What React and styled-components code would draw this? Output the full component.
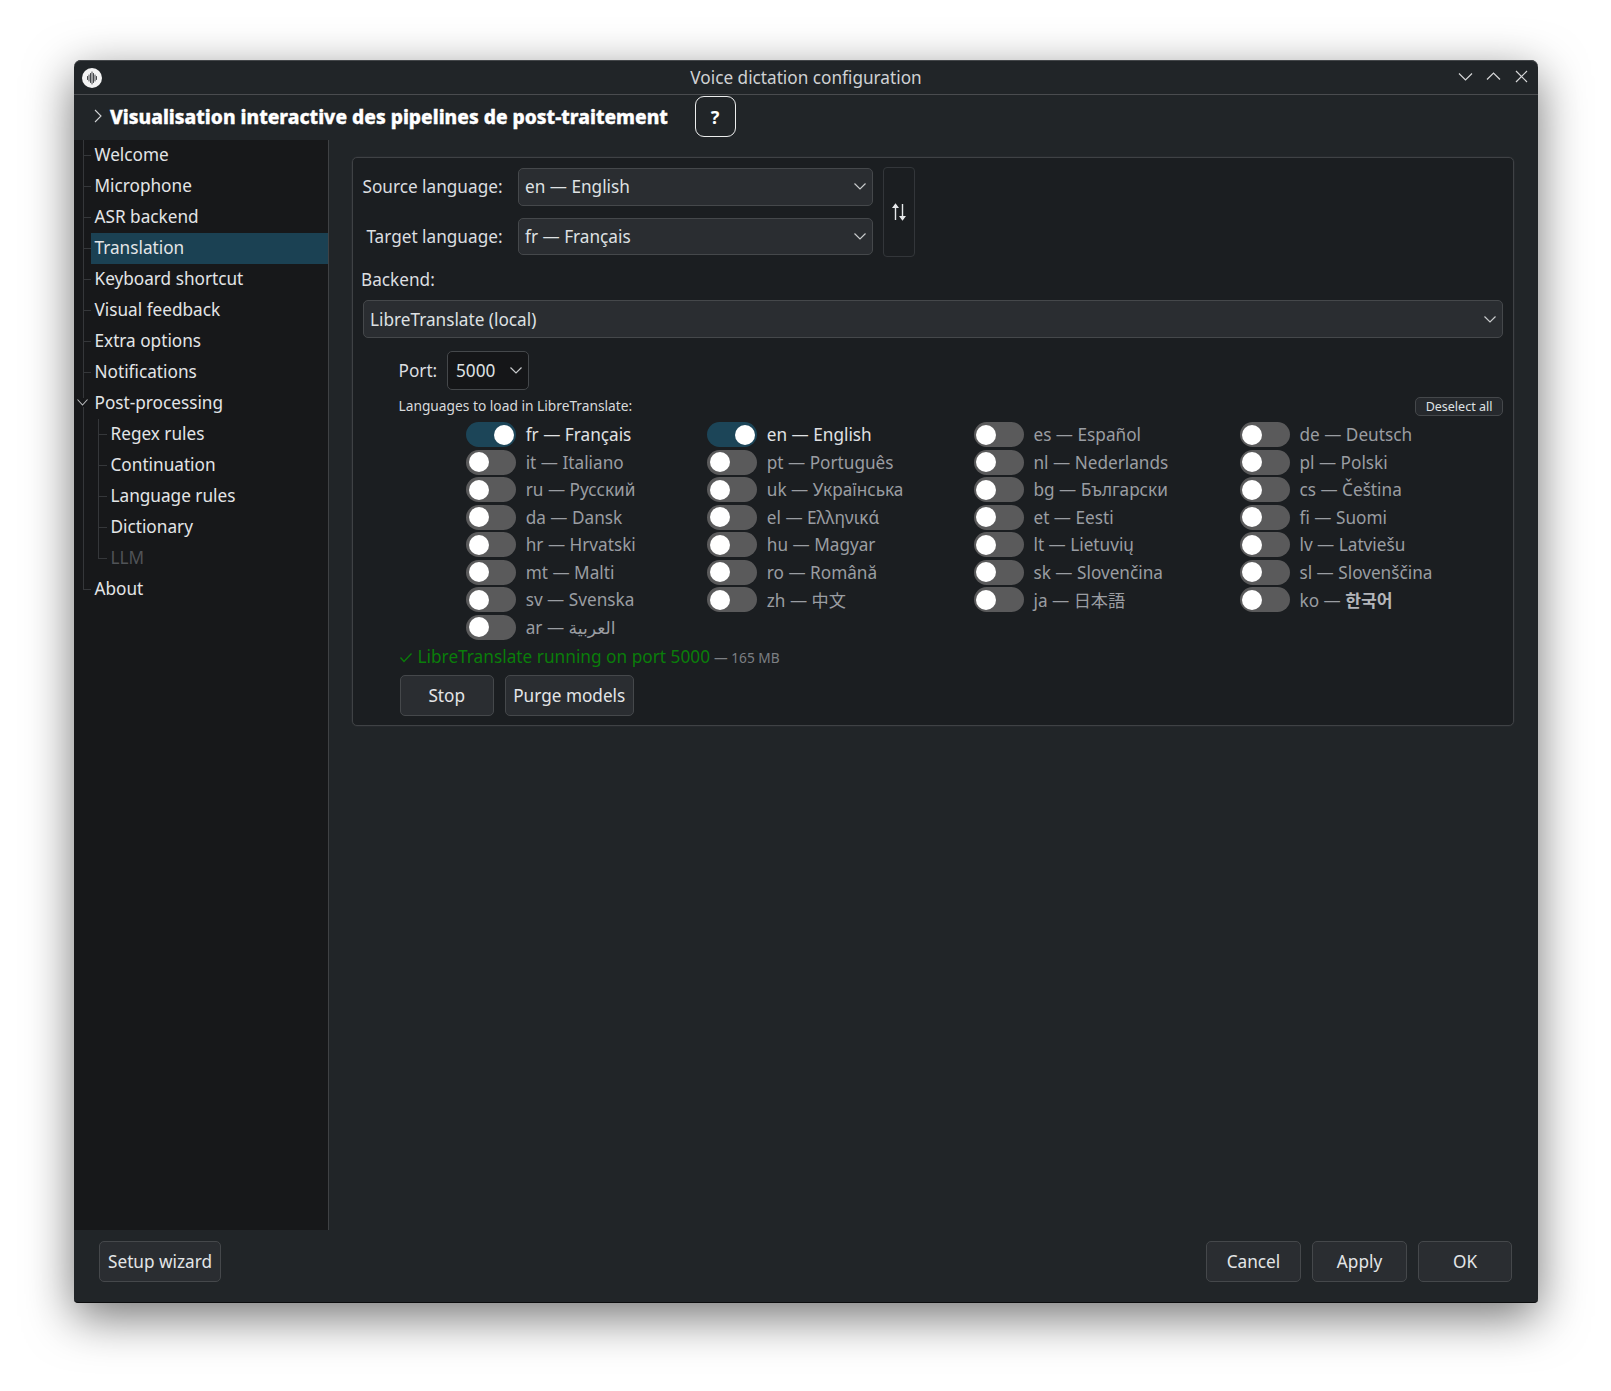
import React from 'react';
import styled, { createGlobalStyle } from 'styled-components';

const Global = createGlobalStyle`
  html, body { margin: 0; padding: 0; background: #fff; }
  body { font-family: "Noto Sans", "DejaVu Sans", "Noto Sans CJK JP", sans-serif; font-size: 17.2px; }
  * { box-sizing: border-box; }
`;
const Page = styled.div`
  width: 1611px; height: 1391px; padding: 60px 0 0 74px; overflow: hidden;
`;
const Window = styled.div`
  width: 1464px; height: 1242.5px; display: flex; flex-direction: column;
  background: #212528; border-radius: 7px 7px 4px 4px; overflow: hidden;
  box-shadow: 0 14px 48px rgba(0,0,0,.55), inset 0 1px 0 #44474a;
  border-bottom: 1px solid #0b0c0d;
  color: #e3e5e7;
`;
const TitleBar = styled.div`
  height: 35px; flex: none; display: flex; align-items: center; justify-content: center; position: relative;
  border-bottom: 1px solid #4a4c4f; font-size: 17.2px; color: #d0d2d4; padding-top: 1px;
`;
const Logo = styled.svg`
  position: absolute; left: 8px; top: 8px; width: 20px; height: 20px;
`;
const WinButtons = styled.div`
  position: absolute; right: 9px; top: 9px; display: flex; gap: 13px;
`;
const WinIcon = styled.svg`
  width: 15px; height: 15px; fill: none; stroke: #d5d6d7; stroke-width: 1.2; display: block;
`;
const HeadingRow = styled.div`
  height: 45px; flex: none; display: flex; align-items: center; padding-left: 19px;
`;
const HeadChevron = styled.svg`
  width: 10px; height: 16px; fill: none; stroke: #cfd1d3; stroke-width: 1.1; margin: 0 7px 4px 0;
`;
const Heading = styled.div`
  font-size: 19.2px; font-weight: 800; color: #fff; width: 584.5px; white-space: nowrap; margin-bottom: 3px;
  -webkit-text-stroke: 0.35px #fff;
`;
const Help = styled.div`
  width: 41px; height: 41px; display: flex; align-items: center; justify-content: center; margin-bottom: 2px;
  border: 1.5px solid #eceded; border-radius: 9px; font-weight: 700; font-size: 18px; color: #fff;
`;
const Main = styled.div`
  flex: 1; display: flex; min-height: 0;
`;
const Sidebar = styled.div`
  width: 255px; flex: none; background: #17181a; border-right: 1px solid #3f4144; padding-left: 17px;
`;
const Row = styled.div`
  height: 31px; line-height: 30px; position: relative; white-space: nowrap;
  padding-left: ${p => (p.$child ? 19.5 : 3.5)}px;
  background: ${p => (p.$selected ? '#1b4153' : 'transparent')};
  color: ${p => (p.$disabled ? '#505357' : '#e3e5e7')};
  &::before {
    content: ""; position: absolute; top: 0; left: -8.5px;
    width: 1px; height: ${p => (p.$last ? 16 : 31)}px; background: #35373a;
  }
  &::after {
    content: ""; position: absolute; top: 15px; left: ${p => (p.$child ? 8 : -8)}px;
    width: 8px; height: 1px; background: #35373a;
    ${p => p.$noStub && 'display: none;'}
  }
`;
const ChildLine = styled.span`
  position: absolute; left: 7px; top: 0; width: 1px; height: ${p => (p.$last ? 16 : 31)}px; background: #35373a;
`;
const TreeChevron = styled.svg`
  position: absolute; left: -15px; top: 10px; width: 13px; height: 9px; fill: none; stroke: #b9bbbd; stroke-width: 1.1;
  background: #17181a;
`;
const Content = styled.div`
  flex: 1; padding: 17px 24px 0 23px; min-width: 0;
`;
const Group = styled.div`
  height: 569px; border: 1px solid #3f4245; border-radius: 5px; background: #1b1e21; padding: 10px 10px 8px 8px;
  box-shadow: 0 0 0 .5px #2c2f32;
`;
const LangGrid = styled.div`
  display: grid; grid-template-columns: 141.5px 370.5px 42px; grid-template-rows: 37.5px 37.5px;
  row-gap: 12px; width: 560px; align-items: center;
`;
const RightLabel = styled.div`
  text-align: right; white-space: nowrap; color: #dcdee0;
`;
const LangCombo = styled.div`
  margin-left: 15.5px;
`;
const Combo = styled.div`
  height: ${p => p.$h || 38}px; border: 1px solid #45484b; border-radius: 5px;
  background: ${p => (p.$dark ? '#151618' : '#2a2d31')};
  display: flex; align-items: center; justify-content: space-between;
  padding: 0 5px 0 ${p => (p.$dark ? 8 : 6)}px; color: #dfe1e3;
`;
const ComboChevron = styled.svg`
  width: 14px; height: 9px; fill: none; stroke: #c8cacc; stroke-width: 1.2; flex: none;
`;
const SwapCell = styled.div`
  grid-column: 3; grid-row: 1 / span 2; width: 32px; height: 90px; margin-left: 10px;
  border: 1px solid #33363a; border-radius: 4px; display: flex; align-items: center; justify-content: center;
`;
const SwapIcon = styled.svg`
  width: 16px; height: 18px; display: block;
`;
const BackendLabel = styled.div`
  height: 24px; line-height: 24px; margin-top: 13px; color: #dcdee0;
`;
const BackendWrap = styled.div`
  margin: 8px 0 0 0; padding: 0 0 0 2px;
`;
const PortRow = styled.div`
  display: flex; align-items: center; margin: 13px 0 0 37.5px; height: 39px;
`;
const PortLabel = styled.div`
  width: 48.5px; color: #dcdee0;
`;
const PortCombo = styled(Combo)`
  width: 82px;
`;
const LoadRow = styled.div`
  display: flex; align-items: center; justify-content: space-between; height: 19px; margin: 6px 0 0 37.5px;
`;
const SmallLabel = styled.div`
  font-size: 13.75px; color: #d8dadc;
`;
const TinyButton = styled.div`
  width: 88px; height: 19px; border: 1px solid #45484b; border-radius: 5px; background: #26292d; margin-top: 2px;
  display: flex; align-items: center; justify-content: center; font-size: 12.5px; color: #dfe1e3;
`;
const ToggleGrid = styled.div`
  display: grid; grid-template-columns: 241.1px 266.7px 266px 1fr; grid-auto-rows: 27.5px;
  margin: 6.1px 0 0 105.2px;
`;
const Item = styled.div`
  display: flex; align-items: center; gap: 9.5px; white-space: nowrap;
  color: ${p => (p.$on ? '#e0e2e4' : '#9a9da2')};
`;
const Track = styled.div`
  width: 50px; height: 25px; border-radius: 12.5px; flex: none; display: flex; align-items: center;
  background: ${p => (p.$on ? '#1c4558' : '#5a5a5b')};
  justify-content: ${p => (p.$on ? 'flex-end' : 'flex-start')};
  padding: 0 2.5px;
`;
const Knob = styled.div`
  width: 20px; height: 20px; border-radius: 50%; background: #fff;
`;
const Hangul = styled.span`
  font-weight: 700; color: #b4b6ba;
`;
const Status = styled.div`
  display: flex; align-items: baseline; height: 22px; line-height: 22px; margin: 5px 0 0 37.5px; white-space: nowrap;
`;
const CheckIcon = styled.svg`
  width: 14px; height: 11px; fill: none; stroke: #0a7d0a; stroke-width: 1.3; margin-right: 5px; align-self: center;
`;
const Running = styled.span`
  color: #0a7d0a; font-size: 17.26px;
`;
const Size = styled.span`
  font-size: 13.7px; color: #7d8084; margin-left: 4px;
`;
const ActionRow = styled.div`
  display: flex; gap: 11px; margin: 7px 0 0 38.5px;
`;
const Button = styled.div`
  height: 41px; width: ${p => p.$w}px; border: 1px solid #45484b; border-radius: 5px; background: #2a2d31;
  display: flex; align-items: center; justify-content: center; color: #e3e5e7; white-space: nowrap;
`;
const Footer = styled.div`
  height: 71.5px; flex: none; display: flex; justify-content: space-between; padding: 10.7px 26px 0 25px;
`;
const FooterGroup = styled.div`
  display: flex; gap: 11px;
`;

const Chevron = () => (
  <ComboChevron viewBox="0 0 14 9"><path d="M1.5 1.5 7 7l5.5-5.5" /></ComboChevron>
);

const tree = [
  { t: 'Welcome' }, { t: 'Microphone' }, { t: 'ASR backend' }, { t: 'Translation', sel: true },
  { t: 'Keyboard shortcut' }, { t: 'Visual feedback' }, { t: 'Extra options' }, { t: 'Notifications' },
  { t: 'Post-processing', chev: true },
  { t: 'Regex rules', child: true }, { t: 'Continuation', child: true }, { t: 'Language rules', child: true },
  { t: 'Dictionary', child: true }, { t: 'LLM', child: true, dis: true, lastChild: true },
  { t: 'About', last: true },
];

const langs = [
  ['fr — Français', 1], ['en — English', 1], ['es — Español'], ['de — Deutsch'],
  ['it — Italiano'], ['pt — Português'], ['nl — Nederlands'], ['pl — Polski'],
  ['ru — Русский'], ['uk — Українська'], ['bg — Български'], ['cs — Čeština'],
  ['da — Dansk'], ['el — Ελληνικά'], ['et — Eesti'], ['fi — Suomi'],
  ['hr — Hrvatski'], ['hu — Magyar'], ['lt — Lietuvių'], ['lv — Latviešu'],
  ['mt — Malti'], ['ro — Română'], ['sk — Slovenčina'], ['sl — Slovenščina'],
  ['sv — Svenska'], ['zh — 中文'], ['ja — 日本語'], ['ko — ', 0, '한국어'],
  ['ar — العربية'],
];

export default function App() {
  return (
    <Page>
      <Global />
      <Window>
        <TitleBar>
          <Logo viewBox="0 0 20 20">
            <circle cx="10" cy="10" r="10" fill="#f4f4f4" />
            <path d="M5.5 8.5v3M7 7v6M8.5 5.5v9M10 4v12M11.5 5.5v9M13 7v6M14.5 8.5v3" stroke="#23272a" strokeWidth=".85" strokeLinecap="round" />
          </Logo>
          Voice dictation configuration
          <WinButtons>
            <WinIcon viewBox="0 0 15 15"><path d="M1 4.5 7.5 11 14 4.5" /></WinIcon>
            <WinIcon viewBox="0 0 15 15"><path d="M1 10.5 7.5 4 14 10.5" /></WinIcon>
            <WinIcon viewBox="0 0 15 15"><path d="M2 2l11 11M13 2 2 13" /></WinIcon>
          </WinButtons>
        </TitleBar>
        <HeadingRow>
          <HeadChevron viewBox="0 0 10 16"><path d="M2 2l6 6-6 6" /></HeadChevron>
          <Heading>Visualisation interactive des pipelines de post-traitement</Heading>
          <Help>?</Help>
        </HeadingRow>
        <Main>
          <Sidebar>
            {tree.map(r => (
              <Row key={r.t} $child={r.child} $selected={r.sel} $disabled={r.dis} $last={r.last} $noStub={r.chev}>
                {r.child && <ChildLine $last={r.lastChild} />}
                {r.chev && (
                  <TreeChevron viewBox="0 0 13 9"><path d="M1.5 1.5 6.5 7l5-5.5" /></TreeChevron>
                )}
                {r.t}
              </Row>
            ))}
          </Sidebar>
          <Content>
            <Group>
              <LangGrid>
                <RightLabel>Source language:</RightLabel>
                <LangCombo><Combo $h={37.5}><span>en — English</span><Chevron /></Combo></LangCombo>
                <SwapCell>
                  <SwapIcon viewBox="0 0 16 18">
                    <path d="M4.5 2v15M11.5 1v15" stroke="#e6e8ea" strokeWidth="1.4" fill="none" />
                    <path d="M4.5 .2 1 5h7zM11.5 17.8 15 13H8z" fill="#e6e8ea" />
                  </SwapIcon>
                </SwapCell>
                <RightLabel>Target language:</RightLabel>
                <LangCombo><Combo $h={37.5}><span>fr — Français</span><Chevron /></Combo></LangCombo>
              </LangGrid>
              <BackendLabel>Backend:</BackendLabel>
              <BackendWrap>
                <Combo $h={38}><span>LibreTranslate (local)</span><Chevron /></Combo>
              </BackendWrap>
              <PortRow>
                <PortLabel>Port:</PortLabel>
                <PortCombo $h={39} $dark><span>5000</span><Chevron /></PortCombo>
              </PortRow>
              <LoadRow>
                <SmallLabel>Languages to load in LibreTranslate:</SmallLabel>
                <TinyButton>Deselect all</TinyButton>
              </LoadRow>
              <ToggleGrid>
                {langs.map(([label, on, bold]) => (
                  <Item key={label} $on={on}>
                    <Track $on={on}><Knob /></Track>
                    <span>{label}{bold && <Hangul>{bold}</Hangul>}</span>
                  </Item>
                ))}
              </ToggleGrid>
              <Status>
                <CheckIcon viewBox="0 0 14 11"><path d="M1.5 5.5 5 9.5l7.5-8" /></CheckIcon>
                <Running>LibreTranslate running on port 5000</Running>
                <Size>— 165 MB</Size>
              </Status>
              <ActionRow>
                <Button $w={94.5}>Stop</Button>
                <Button $w={128.5}>Purge models</Button>
              </ActionRow>
            </Group>
          </Content>
        </Main>
        <Footer>
          <Button $w={122}>Setup wizard</Button>
          <FooterGroup>
            <Button $w={95}>Cancel</Button>
            <Button $w={95}>Apply</Button>
            <Button $w={94}>OK</Button>
          </FooterGroup>
        </Footer>
      </Window>
    </Page>
  );
}
